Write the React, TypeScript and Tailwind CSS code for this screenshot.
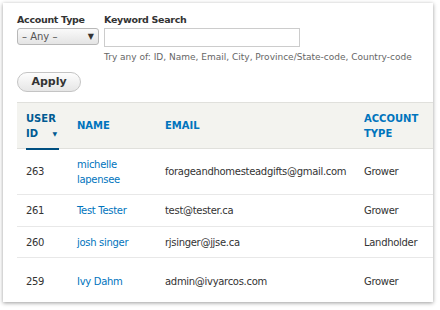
import React from 'react';

type Row = { id: string; name: string[]; email: string; type: string; h: string };

const rows: Row[] = [
  { id: '263', name: ['michelle', 'lapensee'], email: 'forageandhomesteadgifts@gmail.com', type: 'Grower', h: 'h-[46px]' },
  { id: '261', name: ['Test Tester'], email: 'test@tester.ca', type: 'Grower', h: 'h-[32px]' },
  { id: '260', name: ['josh singer'], email: 'rjsinger@jjse.ca', type: 'Landholder', h: 'h-[31px]' },
  { id: '259', name: ['Ivy Dahm'], email: 'admin@ivyarcos.com', type: 'Grower', h: 'h-[48px]' },
];

export default function App() {
  return (
    <div className="w-[440px] h-[310px] bg-white pt-[3px] pl-[3px] font-['DejaVu_Sans',sans-serif] text-[#333]">
      <div className="w-[430px] h-[299px] bg-white shadow-[0_1px_4px_rgba(0,0,0,0.4)] overflow-hidden pl-[14px] pt-[10px]">
        {/* filters */}
        <div className="flex gap-[5px]">
          <div className="flex flex-col">
            <label className="text-[9.5px] tracking-[-0.3px] font-bold leading-[13px] mb-[2px]">Account Type</label>
            <div className="w-[82px] h-[17px] rounded-[3px] border border-[#b8b8b8] bg-gradient-to-b from-[#fafafa] to-[#e4e4e4] flex items-center justify-between px-[4px] text-[10px] text-[#555]">
              <span>– Any –</span>
              <span className="text-[8px] text-[#333]">▼</span>
            </div>
          </div>
          <div className="flex flex-col">
            <label className="text-[9.5px] tracking-[-0.3px] font-bold leading-[13px] mb-[2px]">Keyword Search</label>
            <div className="w-[196px] h-[19px] border border-[#ccc] bg-white" />
            <div className="text-[9px] leading-[13px] text-[#666] mt-[4px] whitespace-nowrap">
              Try any of: ID, Name, Email, City, Province/State-code, Country-code
            </div>
          </div>
        </div>
        <button className="mt-[8px] w-[64px] h-[20px] rounded-full border border-[#c4c4c4] bg-gradient-to-b from-[#fdfdfd] to-[#e6e6e6] text-[11px] font-bold text-[#333]">
          Apply
        </button>

        {/* table */}
        <table className="mt-[10px] w-[420px] table-fixed border-collapse text-[10px] tracking-[-0.3px]">
          <colgroup>
            <col className="w-[51px]" />
            <col className="w-[88px]" />
            <col className="w-[199px]" />
            <col className="w-[82px]" />
          </colgroup>
          <thead>
            <tr className="h-[46px] bg-[#f3f3ef] border-t border-[#e0e0dc] border-b border-[#d8d8d4] tracking-normal">
              <th className="text-left font-bold text-[10px] leading-[15px] text-[#005a92] px-[9px] align-middle">
                <div className="relative pt-[1px]">
                  <div>USER</div>
                  <div className="flex items-center justify-between pr-[2px]">
                    ID <span className="text-[6px]">▼</span>
                  </div>
                  <div className="absolute left-0 right-0 -bottom-[9px] h-[2px] bg-[#004f80]" />
                </div>
              </th>
              <th className="text-left font-bold text-[10px] text-[#0074bd] px-[9px]">NAME</th>
              <th className="text-left font-bold text-[10px] text-[#0074bd] px-[9px]">EMAIL</th>
              <th className="text-left font-bold text-[10px] leading-[15px] text-[#0074bd] px-[9px]">
                ACCOUNT<br />TYPE
              </th>
            </tr>
          </thead>
          <tbody>
            {rows.map((r) => (
              <tr key={r.id} className={`${r.h} border-b border-[#e8e8e8]`}>
                <td className="px-[9px]">{r.id}</td>
                <td className="px-[9px] text-[#0074bd] leading-[15px]">
                  {r.name.map((n) => (
                    <div key={n}>{n}</div>
                  ))}
                </td>
                <td className="px-[9px] whitespace-nowrap">{r.email}</td>
                <td className="px-[9px]">{r.type}</td>
              </tr>
            ))}
          </tbody>
        </table>
      </div>
    </div>
  );
}
